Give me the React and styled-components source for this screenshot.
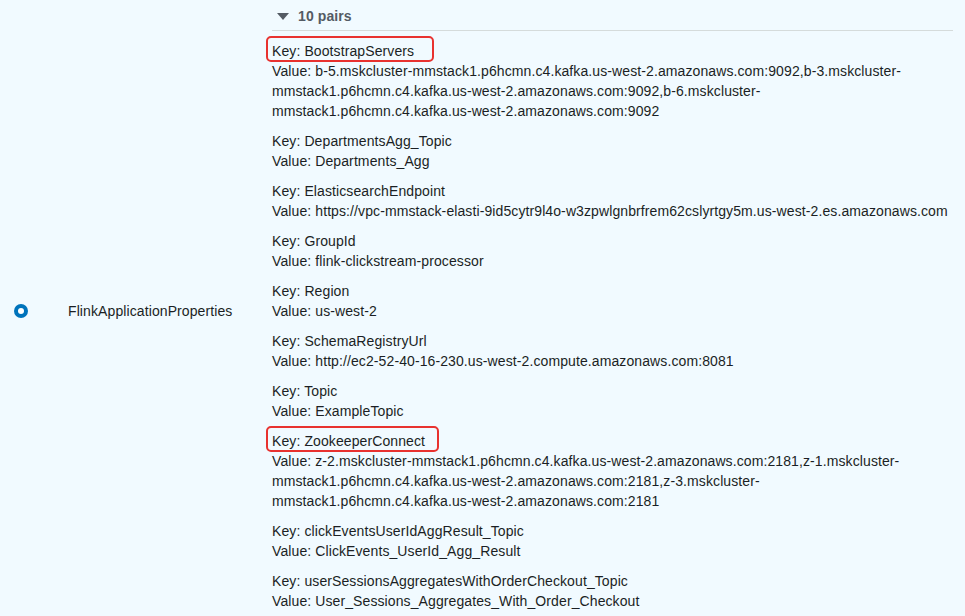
import React from 'react'
import styled, { createGlobalStyle } from 'styled-components'

const GlobalStyle = createGlobalStyle`
    html, body {
        margin: 0;
        padding: 0;
        background-color: #f1faff;
    }
    body {
        font-family: "Liberation Sans", Arial, Helvetica, sans-serif;
        font-size: 14px;
        letter-spacing: 0.1px;
        color: #1b1f24;
    }
`

const pairs = [
    { key: 'BootstrapServers', value: 'b-5.mskcluster-mmstack1.p6hcmn.c4.kafka.us-west-2.amazonaws.com:9092,b-3.mskcluster-mmstack1.p6hcmn.c4.kafka.us-west-2.amazonaws.com:9092,b-6.mskcluster-mmstack1.p6hcmn.c4.kafka.us-west-2.amazonaws.com:9092', mark: 20 },
    { key: 'DepartmentsAgg_Topic', value: 'Departments_Agg' },
    { key: 'ElasticsearchEndpoint', value: 'https://vpc-mmstack-elasti-9id5cytr9l4o-w3zpwlgnbrfrem62cslyrtgy5m.us-west-2.es.amazonaws.com' },
    { key: 'GroupId', value: 'flink-clickstream-processor' },
    { key: 'Region', value: 'us-west-2' },
    { key: 'SchemaRegistryUrl', value: 'http://ec2-52-40-16-230.us-west-2.compute.amazonaws.com:8081' },
    { key: 'Topic', value: 'ExampleTopic' },
    { key: 'ZookeeperConnect', value: 'z-2.mskcluster-mmstack1.p6hcmn.c4.kafka.us-west-2.amazonaws.com:2181,z-1.mskcluster-mmstack1.p6hcmn.c4.kafka.us-west-2.amazonaws.com:2181,z-3.mskcluster-mmstack1.p6hcmn.c4.kafka.us-west-2.amazonaws.com:2181', mark: 14 },
    { key: 'clickEventsUserIdAggResult_Topic', value: 'ClickEvents_UserId_Agg_Result' },
    { key: 'userSessionsAggregatesWithOrderCheckout_Topic', value: 'User_Sessions_Aggregates_With_Order_Checkout' },
]

function App() {
    return (
        <React.Fragment>
            <GlobalStyle />
            <Row>
                <RadioCell>
                    <Radio />
                </RadioCell>
                <NameCell>FlinkApplicationProperties</NameCell>
                <ValueCell>
                    <Expander>
                        <Caret />
                        <span>{pairs.length} pairs</span>
                    </Expander>
                    <PairList>
                        {pairs.map((p) => (
                            <Pair key={p.key}>
                                <div>{p.mark ? <Marked $right={p.mark}>Key: {p.key}</Marked> : <>Key: {p.key}</>}</div>
                                <div>Value: {p.value}</div>
                            </Pair>
                        ))}
                    </PairList>
                </ValueCell>
            </Row>
        </React.Fragment>
    )
}

export default App

const Row = styled.div`
    display: grid;
    grid-template-columns: 68px 204px 681px;
    align-items: center;
    width: 965px;
`

const RadioCell = styled.div`
    padding-left: 14px;
    display: flex;
    align-items: center;
`

const Radio = styled.span`
    width: 14px;
    height: 14px;
    border-radius: 50%;
    background-color: #0073bb;
    display: flex;
    justify-content: center;
    align-items: center;
    &::after {
        content: '';
        width: 6px;
        height: 6px;
        border-radius: 50%;
        background-color: white;
    }
`

const NameCell = styled.div`
    line-height: 20px;
`

const ValueCell = styled.div`
    line-height: 20px;
    padding-top: 6px;
`

const Expander = styled.div`
    display: flex;
    align-items: center;
    padding-left: 5px;
    padding-bottom: 4px;
    border-bottom: 1px solid #d5dbdb;
    color: #545b64;
    font-weight: bold;
    gap: 9px;
`

const Caret = styled.span`
    width: 0;
    height: 0;
    border-left: 6px solid transparent;
    border-right: 6px solid transparent;
    border-top: 7px solid #545b64;
`

const PairList = styled.div`
    padding-top: 10px;
`

const Pair = styled.div`
    margin-bottom: 10px;
`

const Marked = styled.span`
    position: relative;
    &::after {
        content: '';
        position: absolute;
        top: -7px;
        bottom: -3px;
        left: -6px;
        right: -${(p) => p.$right}px;
        border: 2px solid #e8322f;
        border-radius: 5px;
    }
`
